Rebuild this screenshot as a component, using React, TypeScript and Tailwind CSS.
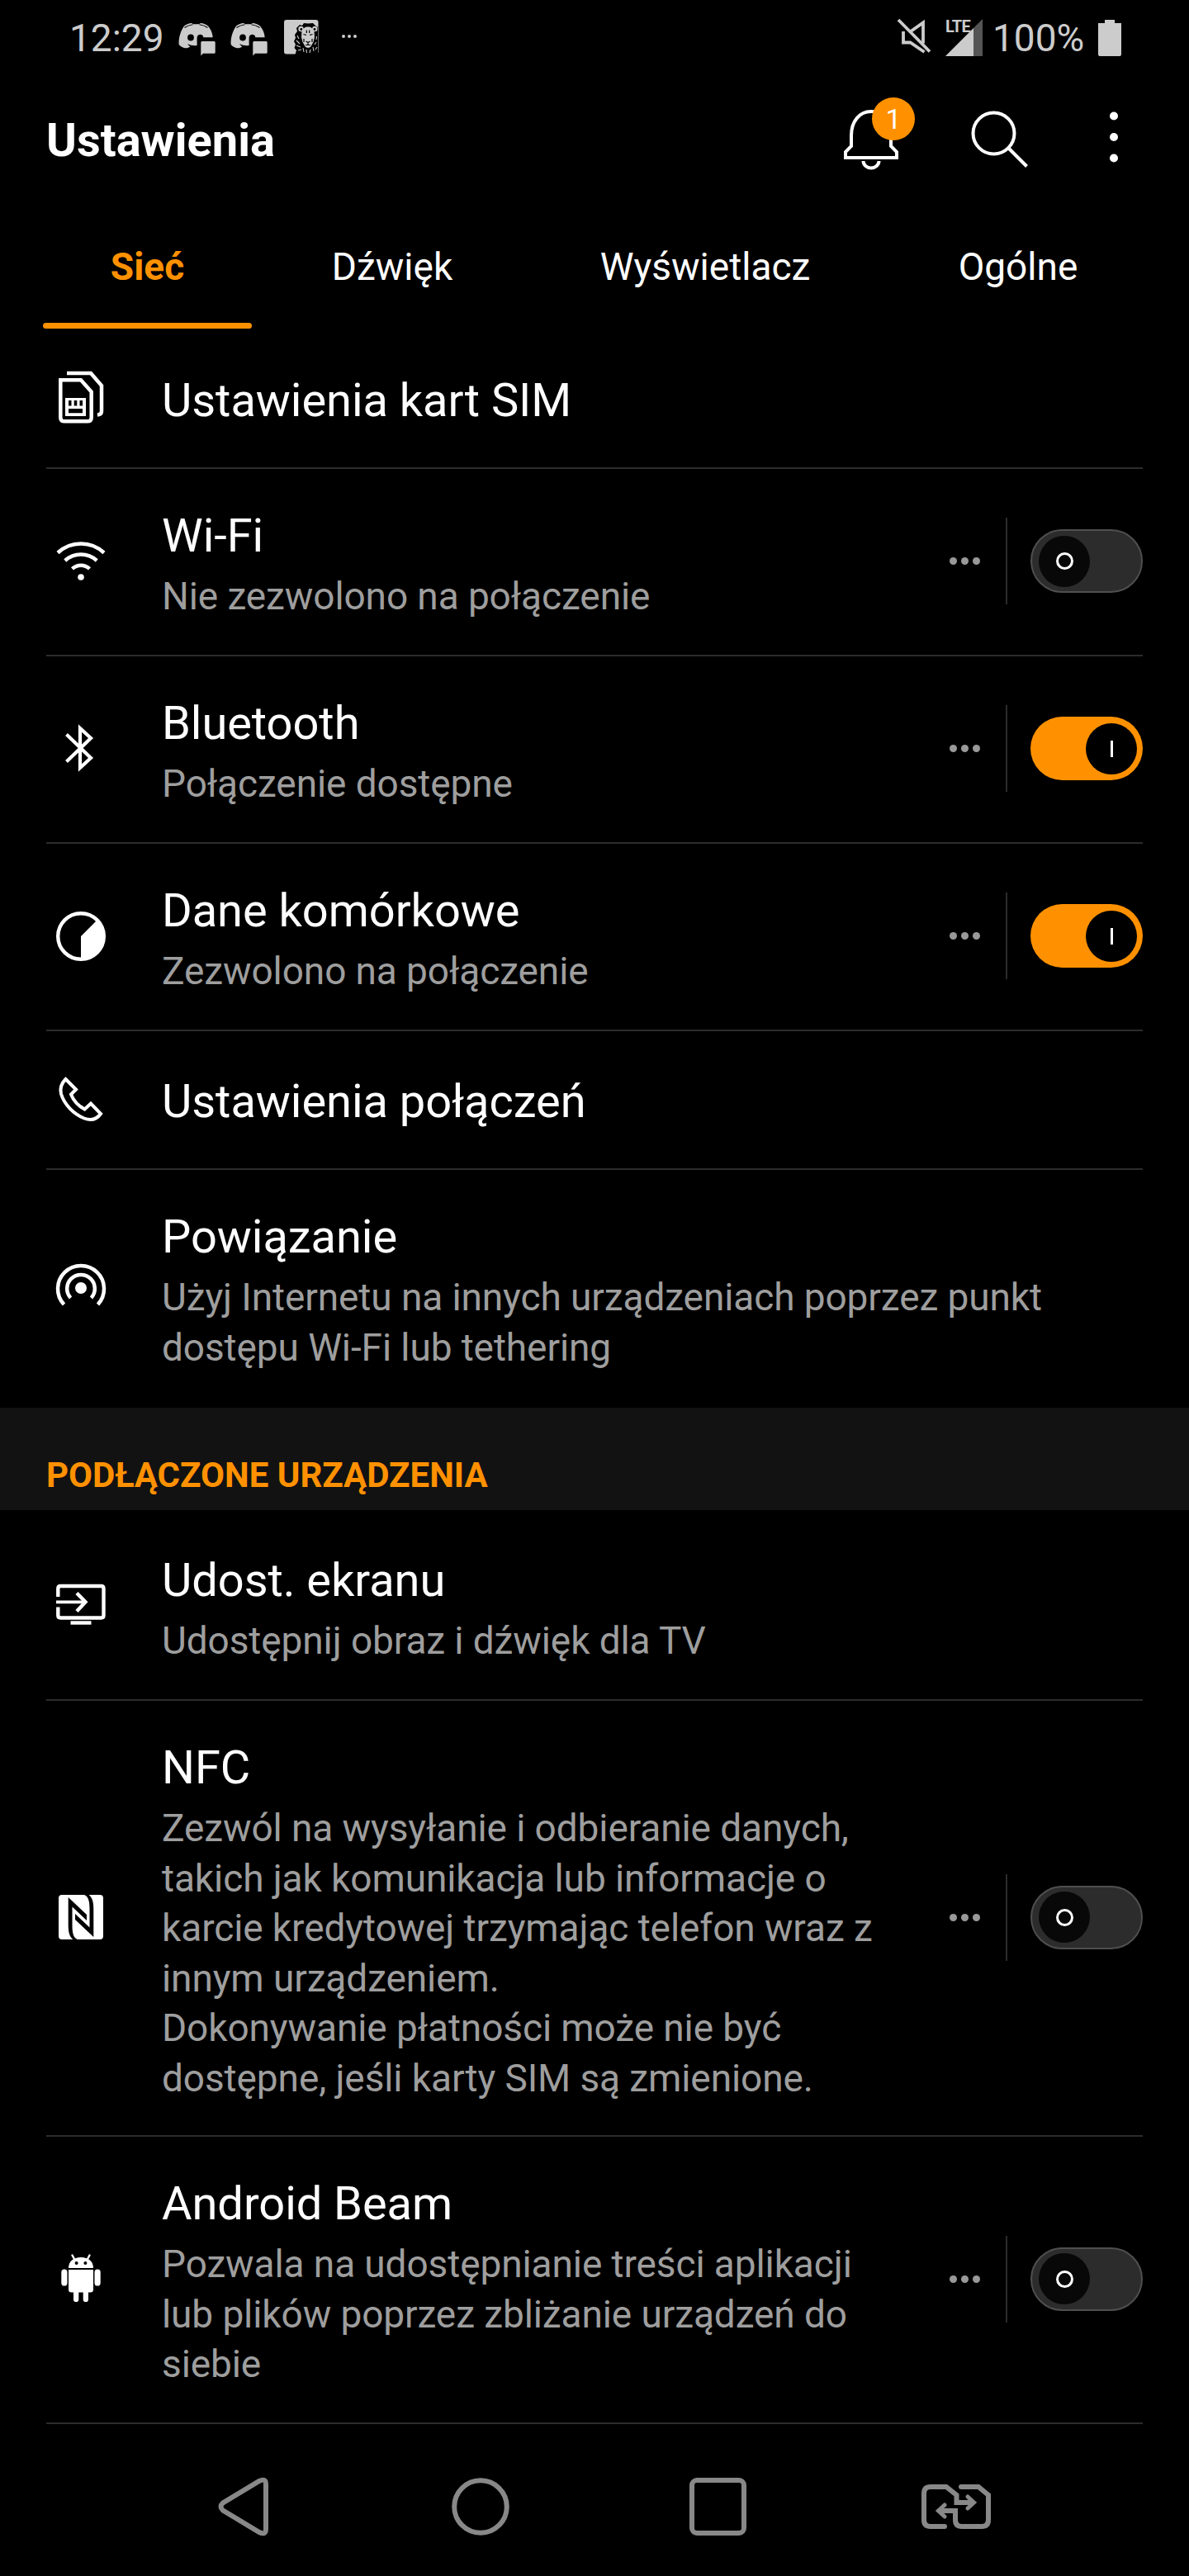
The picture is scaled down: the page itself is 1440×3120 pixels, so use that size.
import type { ReactNode } from "react";

function SimIcon() {
    return (
        <svg viewBox="0 0 72 72" className="w-[72px] h-[72px]" fill="none" stroke="white" strokeWidth="4.5">
            <path d="M19 6H48L61 21V52q0 4-5 4.5" />
            <path d="M11.3 14.3H36L48.7 28.5V59.5Q48.7 64.3 44 64.3H16Q11.3 64.3 11.3 59.5Z" />
            <path
                fill="white"
                stroke="none"
                fillRule="evenodd"
                d="M17 36H42V58H17ZM21 39V45.5H24.5V39ZM27.7 39V45.5H31.3V39ZM34.5 39V45.5H38V39ZM21 49V54.3H38V49Z"
            />
        </svg>
    );
}

function WifiIcon() {
    return (
        <svg viewBox="0 0 72 72" className="w-[72px] h-[72px]" fill="none" stroke="white" strokeWidth="4.5">
            <path d="M8 25.5A41 41 0 0 1 64 25.5" />
            <path d="M16.8 35A28.5 28.5 0 0 1 55.2 35" />
            <path d="M25.5 44.8A15.5 15.5 0 0 1 46.5 44.8" />
            <circle cx="36" cy="55" r="3.8" fill="white" stroke="none" />
        </svg>
    );
}

function BluetoothIcon() {
    return (
        <svg viewBox="0 0 72 72" className="w-[72px] h-[72px]" fill="none" stroke="white" strokeWidth="4.2">
            <path d="M18.5 18.5L48 47L35 59V11L48 23L18.5 51.5" />
        </svg>
    );
}

function DataIcon() {
    return (
        <svg viewBox="0 0 72 72" className="w-[72px] h-[72px]">
            <circle cx="36" cy="36" r="27.8" fill="none" stroke="white" strokeWidth="4.4" />
            <path d="M36 36L55 17A28 28 0 0 1 36 64Z" fill="white" />
        </svg>
    );
}

function PhoneIcon() {
    return (
        <svg viewBox="0 0 72 72" className="w-[72px] h-[72px]" fill="none" stroke="white" strokeWidth="4">
            <path d="M17.5 12L30 24.5L24 30.5C27 38 33 44.5 40.5 48.5L48 41.5L60 54C55 61 48 62.5 40 59.5C27 54 16 43 12 30C10 22 12.5 17 17.5 12Z" />
        </svg>
    );
}

function TetheringIcon() {
    return (
        <svg viewBox="0 0 72 72" className="w-[72px] h-[72px]" fill="none" stroke="white" strokeWidth="4.5">
            <path d="M15.5 56A28 28 0 1 1 56.5 56" />
            <path d="M23.5 48A16.8 16.8 0 1 1 48.5 48" />
            <circle cx="36" cy="36" r="7" fill="white" stroke="none" />
        </svg>
    );
}

function ScreenShareIcon() {
    return (
        <svg viewBox="0 0 72 72" className="w-[72px] h-[72px]" fill="none" stroke="white" strokeWidth="4.4">
            <path d="M8.3 27V17Q8.3 14 11.3 14H60.5Q63.500 14 63.500 17V49.500Q63.500 52.500 60.500 52.500H11.3Q8.3 52.500 8.3 49.500V39.500" />
            <path d="M6 33.3H42" strokeWidth="3.8" />
            <path d="M31 22.5L41.5 33.3L31 44.5" />
            <path d="M23.5 58.5H48.5" />
        </svg>
    );
}

function NfcIcon() {
    return (
        <svg viewBox="0 0 72 72" className="w-[72px] h-[72px]">
            <rect x="9" y="9" width="54" height="54" rx="4" fill="white" />
            <path d="M20.7 12L43 33V40L25.5 23.5V46C25.5 58 28 62.5 34 63.5H27C21 59 20.7 52 20.7 44Z" fill="black" />
            <path d="M51.3 60L29 39V32L46.5 48.5V26C46.5 14 44 9.5 38 8.5H45C51 13 51.3 20 51.3 28Z" fill="black" />
        </svg>
    );
}

function AndroidIcon() {
    return (
        <svg viewBox="0 0 72 72" className="w-[72px] h-[72px]" fill="white">
            <path d="M21 23C21 15 27 10 36 10S51 15 51 23Z" />
            <path d="M25.5 7.5L28.5 13M46.5 7.5L43.5 13" stroke="white" strokeWidth="2.4" strokeLinecap="round" />
            <circle cx="30.6" cy="17" r="2" fill="black" />
            <circle cx="41.4" cy="17" r="2" fill="black" />
            <path d="M21 25H51V49Q51 52.5 47.5 52.5H24.5Q21 52.5 21 49Z" />
            <rect x="12.3" y="24.5" width="7.2" height="20" rx="3.6" />
            <rect x="52.5" y="24.5" width="7.2" height="20" rx="3.6" />
            <rect x="27" y="48" width="6.3" height="16" rx="3.1" />
            <rect x="38.7" y="48" width="6.3" height="16" rx="3.1" />
        </svg>
    );
}

function DiscordIcon() {
    return (
        <svg viewBox="0 0 46 46" className="w-[46px] h-[46px]" fill="#cccccc">
            <path d="M7 8.500C10 6 13 5.300 16 5L18 6.300H25L27 5C30 5.300 33 6 36 8.500C39.500 13 41.300 17 41.700 22.300H30.300C30.300 17.500 22.600 17.500 22.600 23V32C18.500 32.500 14.500 32 11 30Q12.500 32.500 14.300 33.500C10 37 4 35 .7 31C0 23 3 14 7 8.500Z" />
            <circle cx="15" cy="22.500" r="3.900" fill="black" />
            <path d="M7.500 10.500Q11.500 7.600 17.500 6.700M25.500 6.700Q31.500 7.600 35.500 10.500" stroke="black" strokeWidth="1.100" fill="none" />
            <path d="M28.500 27H43.500Q44.700 27 44.700 28.500V40.500Q44.700 41.700 43.500 41.700H30L27.300 44.500V28.500Q27.300 27 28.500 27Z" />
        </svg>
    );
}

function LionIcon() {
    return (
        <svg viewBox="0 0 43 43" className="w-[43px] h-[43px]">
            <rect x="1" y="1" width="41.5" height="41.5" rx="3" fill="#cccccc" />
            <path d="M20 7L23 8L25 5L30 5.500L36 5L39 8L42 10V43H14.500L16 38L13.500 35L15 31L13 27L15 23L14 19L17 15L16 11Z" fill="black" />
            <circle cx="21.500" cy="12" r="3.200" fill="#cccccc" />
            <circle cx="38.300" cy="12" r="3.200" fill="#cccccc" />
            <circle cx="21.800" cy="12.500" r="1.400" fill="black" />
            <circle cx="38" cy="12.500" r="1.400" fill="black" />
            <path d="M22.500 15Q25 9 30 9.500Q35 9 37.500 15L38 22L36.500 28L33 34L30 35L27 34L23.500 28L22 22Z" fill="#cccccc" />
            <path d="M24.500 18.500L28 19.500M35.500 18.500L32 19.500M28.300 13.500V17M31.700 13.500V17M27.500 27L30 28.500L32.500 27M30 28.500V31M27 31.500H33M25 24V28M35 24V28" stroke="black" strokeWidth="1.200" fill="none" />
            <path
                d="M17 20L19 24M16 26L20 30M16 32L21 34M18 38L22 37M24 35L25 40M28 37L28.500 41M33 37L32 41M36 34L37 39M40 28L38 31M40.500 21L40 25M41 34L39 37"
                stroke="#cccccc"
                strokeWidth="1.100"
            />
        </svg>
    );
}

function MuteIcon() {
    return (
        <svg viewBox="0 0 42 44" className="w-[42px] h-[44px]" fill="none" stroke="#cccccc" strokeWidth="3.8">
            <path d="M17 16L32 5.5V30.5" />
            <path d="M8 16V29.5H16.5L33.5 41" />
            <path d="M2 2L40 40.5" />
        </svg>
    );
}

function SignalIcon() {
    return (
        <div className="relative w-[46px] h-[46px]">
            <svg viewBox="0 0 46 46" className="w-[46px] h-[46px]">
                <path d="M0 45L34 11V45Z" fill="#cccccc" />
                <path d="M34 11L45 0V45H34Z" fill="#555555" />
            </svg>
            <span className="absolute left-0 -top-[1px] text-[20px] leading-[20px] font-bold tracking-[-0.8px]">LTE</span>
        </div>
    );
}

function StatusBar() {
    return (
        <div className="h-[92px] pl-[84px] pr-[82px] flex flex-row items-center justify-between text-[#cccccc]">
            <div className="flex flex-row items-center">
                <p className="w-[132px] text-[46px] leading-[54px]">12:29</p>
                <div className="w-[63px]"><DiscordIcon /></div>
                <div className="w-[64px]"><DiscordIcon /></div>
                <div className="w-[71px] pb-[4px]"><LionIcon /></div>
                <div className="flex flex-row gap-[3px] pb-[4px]">
                    <span className="w-[4px] h-[4px] rounded-full bg-[#cccccc]" />
                    <span className="w-[4px] h-[4px] rounded-full bg-[#cccccc]" />
                    <span className="w-[4px] h-[4px] rounded-full bg-[#cccccc]" />
                </div>
            </div>
            <div className="flex flex-row items-center">
                <div className="w-[59px] pb-[4px]"><MuteIcon /></div>
                <SignalIcon />
                <p className="w-[139px] pl-[11px] text-[46px] leading-[54px]">100%</p>
                <svg viewBox="0 0 28 44" className="w-[28px] h-[44px]" fill="#cccccc">
                    <path d="M8 0H20V4H28V42Q28 44 26 44H2Q0 44 0 42V4H8Z" />
                </svg>
            </div>
        </div>
    );
}

function Header() {
    return (
        <div className="h-[156px] pl-[56px] pr-[84px] flex flex-row items-center justify-between">
            <h1 className="text-[56px] leading-[66px] font-bold">Ustawienia</h1>
            <div className="flex flex-row items-center pb-[5px]">
                <div className="relative w-[155px] h-[90px]">
                    <svg viewBox="0 0 90 90" className="w-[90px] h-[90px]" fill="none" stroke="white" strokeWidth="4">
                        <path d="M10 41C10 24 20 12 34 12S58 24 58 41V54L65 61V68H3V61L10 54Z" />
                        <path d="M24.5 72A9.5 8.5 0 0 0 43.5 72" />
                    </svg>
                    <span className="absolute left-[35px] -top-[5px] w-[52px] h-[52px] rounded-full bg-[#ff9100] flex items-center justify-center text-[34px] leading-[34px]">
                        1
                    </span>
                </div>
                <svg viewBox="0 0 70 70" className="w-[70px] h-[70px] mt-[2px] mr-[96px]" fill="none" stroke="white" strokeWidth="4">
                    <circle cx="27.5" cy="27.5" r="25" />
                    <path d="M45.5 45.5L67.5 67.5" />
                </svg>
                <svg viewBox="0 0 14 62" className="w-[14px] h-[62px] mb-[3px]" fill="white">
                    <circle cx="7" cy="5.5" r="5" />
                    <circle cx="7" cy="31" r="5" />
                    <circle cx="7" cy="56.5" r="5" />
                </svg>
            </div>
        </div>
    );
}

function Tabs() {
    return (
        <div className="h-[150px] pl-[52px] flex flex-row text-[46px] leading-[54px] text-center">
            <div className="w-[253px] h-full flex flex-col justify-between text-[#ff9100] font-bold">
                <p className="pt-[48px]">Sieć</p>
                <div className="h-[7px] rounded-full bg-[#ff9100]" />
            </div>
            <p className="w-[340px] pt-[48px]">Dźwięk</p>
            <p className="w-[418px] pt-[48px]">Wyświetlacz</p>
            <p className="w-[340px] pt-[48px]">Ogólne</p>
        </div>
    );
}

function Toggle({ on }: { on: boolean }) {
    return on ? (
        <div className="w-[136px] h-[77px] pr-[7px] rounded-full bg-[#ff9100] flex items-center justify-end">
            <div className="w-[62px] h-[62px] rounded-full bg-black flex items-center justify-center">
                <span className="w-[3px] h-[20px] bg-white" />
            </div>
        </div>
    ) : (
        <div className="w-[136px] h-[77px] pl-[8px] rounded-full bg-[#2c2c2c] border-2 border-[#4f4f4f] flex items-center">
            <div className="w-[62px] h-[62px] rounded-full bg-[#080808] flex items-center justify-center">
                <span className="w-[21px] h-[21px] rounded-full border-[3px] border-white" />
            </div>
        </div>
    );
}

type RowProps = {
    icon: ReactNode;
    title: string;
    text?: string;
    toggle?: "on" | "off";
    className: string;
};

function Row({ icon, title, text, toggle, className }: RowProps) {
    return (
        <div className={`mx-[56px] pl-[6px] flex flex-row items-center border-[#2c2c2c] ${className}`}>
            <div className="pb-[2px]">{icon}</div>
            <div className="flex-1 self-stretch pl-[62px] flex flex-col">
                <p className="text-[56px] leading-[66px] tracking-[-0.05px]">{title}</p>
                {text && (
                    <p className="pt-[10px] text-[46px] leading-[60.5px] tracking-[-0.1px] text-[#9e9e9e] whitespace-pre">{text}</p>
                )}
            </div>
            {toggle && (
                <div className="flex flex-row items-center pb-[2px]">
                    <div className="w-[68px] flex flex-row gap-[5px]">
                        <span className="w-[9px] h-[9px] rounded-full bg-[#999999]" />
                        <span className="w-[9px] h-[9px] rounded-full bg-[#999999]" />
                        <span className="w-[9px] h-[9px] rounded-full bg-[#999999]" />
                    </div>
                    <div className="w-[2px] h-[105px] mr-[28px] bg-[#2c2c2c]" />
                    <Toggle on={toggle === "on"} />
                </div>
            )}
        </div>
    );
}

function NavBar() {
    return (
        <div className="h-[168px] px-[144px] flex flex-row items-center justify-between">
            <div className="w-[288px] flex justify-center pl-[12px]">
                <svg viewBox="0 0 72 72" className="w-[72px] h-[72px]" fill="none" stroke="#888888" strokeWidth="6">
                    <path d="M12 31.500Q7 36 12 40.500L56 67Q64 71 64 63V9Q64 1 56 5Z" />
                </svg>
            </div>
            <div className="w-[288px] flex justify-center pl-[12px]">
                <svg viewBox="0 0 72 72" className="w-[72px] h-[72px]" fill="none" stroke="#888888" strokeWidth="6">
                    <circle cx="36" cy="36" r="31.8" />
                </svg>
            </div>
            <div className="w-[288px] flex justify-center pl-[12px]">
                <svg viewBox="0 0 72 72" className="w-[72px] h-[72px]" fill="none" stroke="#888888" strokeWidth="6">
                    <rect x="4" y="4" width="63" height="64" rx="6" />
                </svg>
            </div>
            <div className="w-[288px] flex justify-center pl-[12px]">
                <svg viewBox="0 0 90 60" className="w-[90px] h-[60px]" fill="none" stroke="#888888" strokeWidth="6" strokeLinecap="round">
                    <path d="M31 54H14Q6 54 6 46V14Q6 6 14 6H33L45.5 16V25H64" />
                    <path d="M59 18L66.5 25L59 32" strokeWidth="5" />
                    <path d="M51 6H72L84 16V46Q84 54 76 54H52Q44 54 44 46V35H25" />
                    <path d="M31 28L23.5 35L31 42" strokeWidth="5" />
                </svg>
            </div>
        </div>
    );
}

export default function App() {
    return (
        <div className="w-[1440px] h-[3120px] overflow-hidden bg-black text-white font-[Roboto,'Liberation_Sans',sans-serif]">
            <StatusBar />
            <Header />
            <Tabs />
            <Row icon={<SimIcon />} title="Ustawienia kart SIM" className="h-[170px] pt-[54px] pb-[52px] border-b-2" />
            <Row icon={<WifiIcon />} title="Wi-Fi" text="Nie zezwolono na połączenie" toggle="off" className="h-[227px] *:nth-[2]:pt-[48px] border-b-2" />
            <Row icon={<BluetoothIcon />} title="Bluetooth" text="Połączenie dostępne" toggle="on" className="h-[227px] *:nth-[2]:pt-[48px] border-b-2" />
            <Row icon={<DataIcon />} title="Dane komórkowe" text="Zezwolono na połączenie" toggle="on" className="h-[227px] *:nth-[2]:pt-[48px] border-b-2" />
            <Row icon={<PhoneIcon />} title="Ustawienia połączeń" className="h-[168px] *:nth-[2]:pt-[52px] border-b-2" />
            <Row
                icon={<TetheringIcon />}
                title="Powiązanie"
                text={"Użyj Internetu na innych urządzeniach poprzez punkt\ndostępu Wi-Fi lub tethering"}
                className="h-[288px] *:nth-[2]:pt-[48px]"
            />
            <div className="h-[124px] pl-[56px] pt-[57px] bg-[#121212]">
                <h2 className="text-[42px] leading-[50px] font-bold text-[#ff9100]">PODŁĄCZONE URZĄDZENIA</h2>
            </div>
            <Row icon={<ScreenShareIcon />} title="Udost. ekranu" text="Udostępnij obraz i dźwięk dla TV" className="h-[231px] *:nth-[2]:pt-[52px] border-b-2" />
            <Row
                icon={<NfcIcon />}
                title="NFC"
                text={
                    "Zezwól na wysyłanie i odbieranie danych,\ntakich jak komunikacja lub informacje o\nkarcie kredytowej trzymając telefon wraz z\ninnym urządzeniem.\nDokonywanie płatności może nie być\ndostępne, jeśli karty SIM są zmienione."
                }
                toggle="off"
                className="h-[528px] *:nth-[2]:pt-[48px] border-b-2"
            />
            <Row
                icon={<AndroidIcon />}
                title="Android Beam"
                text={"Pozwala na udostępnianie treści aplikacji\nlub plików poprzez zbliżanie urządzeń do\nsiebie"}
                toggle="off"
                className="h-[348px] *:nth-[2]:pt-[48px] border-b-2"
            />
            <div className="pt-[16px]">
                <NavBar />
            </div>
        </div>
    );
}
